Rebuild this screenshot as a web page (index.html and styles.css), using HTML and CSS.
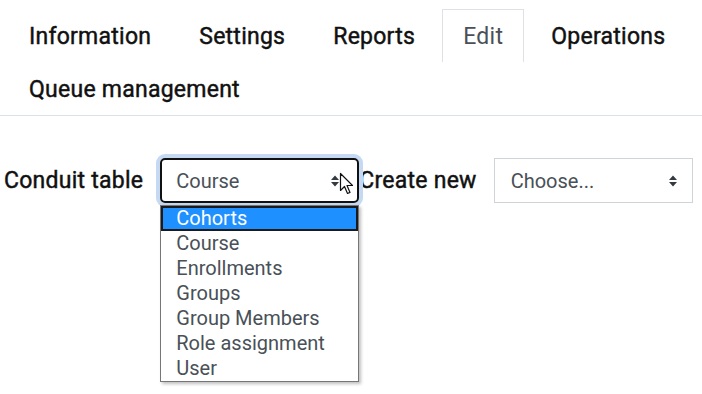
FILE: index.html
```html
<!DOCTYPE html>
<html>
<head>
<meta charset="utf-8"/>
<link rel="stylesheet" href="styles.css">
<title>Conduit table</title>
</head>
<body>

<ul class="tabs">
<li class="tab"><a>Information</a></li>
<li class="tab"><a>Settings</a></li>
<li class="tab"><a>Reports</a></li>
<li class="tab now"><a>Edit</a></li>
<li class="tab"><a>Operations</a></li>
<li class="tab"><a>Queue management</a></li>
</ul>

<form class="frm">
<label class="lbl">Conduit table</label>
<div class="sel focus">
<span class="val">Course</span>
<svg class="arr" width="10" height="14" viewBox="0 0 10 14"><path d="M1 6L5 1.5L9 6Z M1 8L5 12.5L9 8Z" fill="#343a40"/></svg>
<svg class="cur" width="16" height="24" viewBox="0 0 16 24"><path d="M1.5 1.5V18.5L5.5 14.5L8.5 21.5L11 20.4L8 13.5H13.5Z" fill="#fff" stroke="#111" stroke-width="1.2" stroke-linejoin="round"/></svg>
<ul class="opts">
<li class="opt on">Cohorts</li>
<li class="opt">Course</li>
<li class="opt">Enrollments</li>
<li class="opt">Groups</li>
<li class="opt">Group Members</li>
<li class="opt">Role assignment</li>
<li class="opt">User</li>
</ul>
</div>
<label class="lbl lbl2">Create new</label>
<div class="sel">
<span class="val">Choose...</span>
<svg class="arr" width="10" height="14" viewBox="0 0 10 14"><path d="M1 6L5 1.5L9 6Z M1 8L5 12.5L9 8Z" fill="#343a40"/></svg>
</div>
</form>

</body>
</html>
```
FILE: styles.css
```css
ul,ol{margin:0;padding:0;list-style:none}
html,body{height:100%;}
body{margin:0;min-height:394px;font-family:Roboto,"Liberation Sans",sans-serif;color:#1d2125;background:#fff;}

/* medium weight: regular face, slightly thickened */
.tab a,.lbl{font-size:23px;font-weight:400;letter-spacing:.25px;color:#111;-webkit-text-stroke:.45px #111;}

/** tabs **/
.tabs{display:flex;flex-wrap:wrap;padding:9px 8px 0;border-bottom:1px solid #dee2e6;}
.tab{margin-right:6px;}
.tab a{display:block;padding:11px 20px 9px;border:1px solid transparent;border-bottom:0;line-height:32px;}
.tab.now a{border-color:#dee2e6;color:#495057;letter-spacing:.3px;-webkit-text-stroke:0;}

/** form row **/
.frm{display:flex;align-items:center;margin:42px 0 0;padding-left:4px;}
.lbl{margin-right:17px;}
.sel{position:relative;display:flex;align-items:center;box-sizing:border-box;width:199px;height:45px;
padding:0 14px 0 16px;border:1px solid #ced4da;font-size:20px;color:#495057;}
.sel .val{flex:1;}
.sel.focus{border:2px solid #111;border-radius:5px;padding-left:14px;box-shadow:0 0 0 4px #c6d9f2;}
.sel.focus .arr{margin-right:3px;}
.cur{position:absolute;right:2px;top:12px;}

/** open list **/
.opts{position:absolute;left:-2px;top:45px;width:199px;box-sizing:border-box;
border:1px solid #767676;background:#fff;box-shadow:2px 2px 3px rgba(0,0,0,.25);z-index:5;}
.opt{height:25px;line-height:25px;padding-left:15px;font-size:20px;color:#495057;}
.opt.on{background:#1e90ff;color:#fff;outline:2px solid #1a1a1a;outline-offset:-2px;line-height:24px;}
```
